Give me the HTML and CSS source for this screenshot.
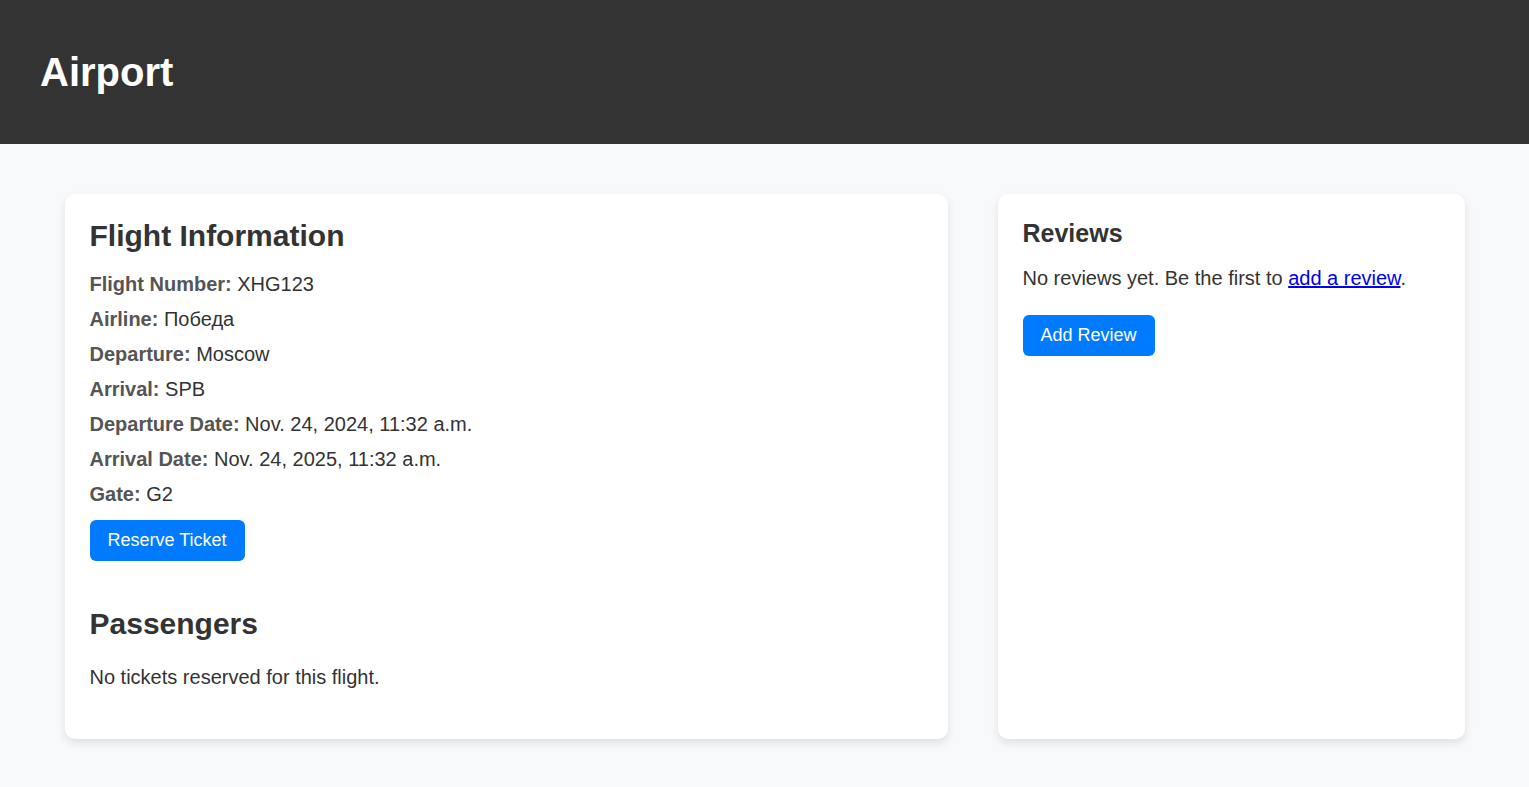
FILE: index.html
```html
<!DOCTYPE html>
<html lang="en">
<head>
<meta charset="utf-8">
<title>Airport</title>
<link rel="stylesheet" href="styles.css">
</head>
<body>
<header class="site-header"><h1 class="site-title">Airport</h1></header>
<main class="content">
  <section class="card flight">
    <h2 class="card-title">Flight Information</h2>
    <div class="details">
      <p><strong>Flight Number:</strong> XHG123</p>
      <p><strong>Airline:</strong> Победа</p>
      <p><strong>Departure:</strong> Moscow</p>
      <p><strong>Arrival:</strong> SPB</p>
      <p><strong>Departure Date:</strong> Nov. 24, 2024, 11:32 a.m.</p>
      <p><strong>Arrival Date:</strong> Nov. 24, 2025, 11:32 a.m.</p>
      <p><strong>Gate:</strong> G2</p>
    </div>
    <button class="btn" type="button">Reserve Ticket</button>
    <h2 class="card-title passengers-title">Passengers</h2>
    <p>No tickets reserved for this flight.</p>
  </section>
  <aside class="card reviews">
    <h3 class="reviews-title">Reviews</h3>
    <p class="reviews-text">No reviews yet. Be the first to <a href="#">add a review</a>.</p>
    <button class="btn" type="button">Add Review</button>
  </aside>
</main>
</body>
</html>
```
FILE: styles.css
```css
* {
  box-sizing: border-box;
}

body {
  margin: 0;
  background: #f8f9fb;
  color: #333;
  font: 20px/24px "Liberation Sans", Arial, sans-serif;
}

h1, h2, h3, p {
  margin: 0;
}

.site-header {
  padding: 48px 40px;
  background: #333;
  color: #fff;
}

.site-title {
  font-size: 40px;
  line-height: 48px;
}

.content {
  display: flex;
  gap: 50px;
  max-width: 1400px;
  margin: 50px auto 48px;
}

.card {
  padding: 25px;
  border-radius: 10px;
  background: #fff;
  box-shadow: 0 4px 8px rgba(0, 0, 0, 0.1);
}

.flight {
  flex: 1;
  padding-bottom: 50px;
}

.reviews {
  flex: 0 0 467px;
}

.card-title {
  margin-bottom: 20px;
  font-size: 30px;
  line-height: 33px;
}

.details {
  display: grid;
  gap: 11px;
  margin-bottom: 14px;
}

.details strong {
  color: #555;
}

.btn {
  display: block;
  padding: 10px 18px;
  border: 0;
  border-radius: 6px;
  background: #007bff;
  color: #fff;
  font: 18px/21px "Liberation Sans", Arial, sans-serif;
  cursor: pointer;
}

.passengers-title {
  margin: 46px 0 25px;
}

.reviews-title {
  margin-bottom: 18px;
  font-size: 25px;
  line-height: 29px;
}

.reviews-text {
  margin-bottom: 25px;
}
```
